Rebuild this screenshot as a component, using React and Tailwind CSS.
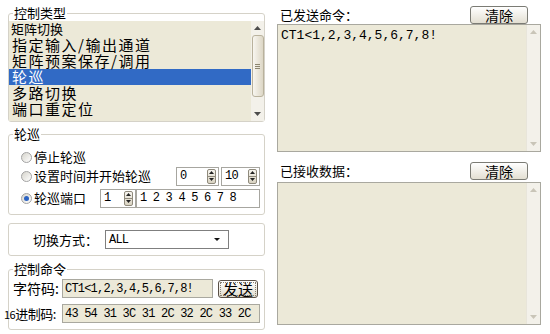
import React from "react";

const mono = "font-['Liberation_Mono',monospace]";

const Up = ({ color = "#4d4d4d" }) => (
  <svg width="7" height="4" viewBox="0 0 7 4">
    <polygon points="0,4 3.5,0 7,4" fill={color} />
  </svg>
);

const Down = ({ color = "#4d4d4d" }) => (
  <svg width="7" height="4" viewBox="0 0 7 4">
    <polygon points="0,0 3.5,4 7,0" fill={color} />
  </svg>
);

const Radio = ({ checked }) => (
  <span className="w-[11px] h-[11px] shrink-0 rounded-full border border-[#a3a3a3] bg-linear-to-br from-[#d6d4cc] to-white flex items-center justify-center">
    {checked && <span className="w-[5px] h-[5px] rounded-full bg-[#2c63c2]" />}
  </span>
);

const SpinArrows = () => (
  <div className="w-[9px] h-[15px] flex flex-col border border-[#8f8a7c] rounded-[2px] bg-linear-to-b from-[#f7f5ef] to-[#d9d3c2]">
    <div className="flex-1 flex items-center justify-center border-b border-[#8f8a7c]">
      <svg width="5" height="3" viewBox="0 0 5 3">
        <polygon points="0,3 2.5,0 5,3" fill="#222" />
      </svg>
    </div>
    <div className="flex-1 flex items-center justify-center">
      <svg width="5" height="3" viewBox="0 0 5 3">
        <polygon points="0,0 2.5,3 5,0" fill="#222" />
      </svg>
    </div>
  </div>
);

const Spin = ({ value, width }) => (
  <div
    className={`${width} h-[19px] border border-[#a7a6a0] bg-white flex items-center justify-between pl-[3px] pr-[2px] ${mono} text-[12px] tracking-[-0.8px]`}>
    <span>{value}</span>
    <SpinArrows />
  </div>
);

const XpButton = ({ children, className = "" }) => (
  <button
    className={`rounded-[3px] border border-[#7b7b74] bg-linear-to-b from-white to-[#e3dfd2] text-[14px] leading-none text-black ${className}`}>
    {children}
  </button>
);

const TextBox = ({ text, className }) => (
  <div className={`flex flex-col border border-[#a9a89f] bg-[#ece9d8] ${className}`}>
    <div className="flex-1 flex min-h-0">
      <div className={`flex-1 pl-[3px] pt-[4px] ${mono} text-[13px] leading-[14px]`}>
        {text}
      </div>
      <div className="w-[14px] flex flex-col items-center justify-between py-[5px] bg-[#f3f1ea] border-l border-[#e8e5da]">
        <Up color="#c9c5b8" />
        <Down color="#c9c5b8" />
      </div>
    </div>
  </div>
);

const items = [
  "指定输入/输出通道",
  "矩阵预案保存/调用",
  "轮巡",
  "多路切换",
  "端口重定位",
];

export default function App() {
  return (
    <div className="w-[550px] h-[334px] bg-white flex overflow-hidden text-black font-['Noto_Sans_CJK_SC',sans-serif]">
      {/* left column */}
      <div className="w-[257px] ml-[8px] flex flex-col">
        <fieldset className="mt-[6px] border border-[#d5d2c8] rounded-[3px] p-0">
          <legend className="ml-[4px] px-[1px] text-[13px] leading-[14px]">控制类型</legend>
          <div className="mt-[1px] h-[100px] flex bg-[#ece9d8]">
            <div className="flex-1 overflow-hidden">
              <div className="h-[16px] pl-[2px] text-[13px] leading-[16px]">矩阵切换</div>
              {items.map((it) => (
                <div
                  key={it}
                  className={`h-[16px] pl-[3px] text-[15px] leading-[16px] tracking-[1.5px] whitespace-nowrap ${
                    it === "轮巡" ? "bg-[#316ac5] text-white" : ""
                  }`}>
                  {it}
                </div>
              ))}
            </div>
            <div className="w-[13px] flex flex-col items-center bg-[#f3f1ea]">
              <div className="h-[14px] flex items-center">
                <Up />
              </div>
              <div className="w-[12px] h-[62px] rounded-[3px] border border-[#b9b29d] bg-linear-to-r from-[#f8f6f0] to-[#ddd7c6] flex flex-col items-center justify-center gap-[1px]">
                <div className="w-[5px] h-px bg-[#8c8670]" />
                <div className="w-[5px] h-px bg-[#8c8670]" />
                <div className="w-[5px] h-px bg-[#8c8670]" />
              </div>
              <div className="flex-1" />
              <div className="h-[14px] flex items-center">
                <Down />
              </div>
            </div>
          </div>
        </fieldset>

        <fieldset className="mt-[5px] border border-[#d5d2c8] rounded-[3px] p-0">
          <legend className="ml-[4px] px-[1px] text-[13px] leading-[14px]">轮巡</legend>
          <div className="pt-[7px] pb-[6px] pl-[12px] pr-[4px] text-[13px]">
            <div className="h-[18px] flex items-center gap-[2px]">
              <Radio />
              <span>停止轮巡</span>
            </div>
            <div className="h-[20px] flex items-center gap-[2px]">
              <Radio />
              <span>设置时间并开始轮巡</span>
              <div className="ml-auto flex gap-[2px]">
                <Spin value="0" width="w-[43px]" />
                <Spin value="10" width="w-[39px]" />
              </div>
            </div>
            <div className="mt-[2px] h-[20px] flex items-center gap-[2px]">
              <Radio checked />
              <span>轮巡端口</span>
              <div className="ml-auto flex">
                <Spin value="1" width="w-[36px]" />
                <div className={`w-[124px] h-[19px] border border-[#a7a6a0] bg-white pl-[3px] flex items-center ${mono} text-[12px] tracking-[-0.8px]`}>
                  1 2 3 4 5 6 7 8
                </div>
              </div>
            </div>
          </div>
        </fieldset>

        <div className="mt-[8px] h-[33px] border border-[#d5d2c8] rounded-[3px] flex items-center pl-[24px] gap-[7px]">
          <span className="text-[13px]">切换方式：</span>
          <div className={`w-[124px] h-[19px] border border-[#7f7f7f] bg-white flex items-center justify-between pl-[3px] pr-[8px] ${mono} text-[12px] tracking-[-0.8px]`}>
            <span>ALL</span>
            <svg width="6" height="3" viewBox="0 0 6 3">
              <polygon points="0,0 3,3 6,0" fill="#111" />
            </svg>
          </div>
        </div>

        <fieldset className="mt-[6px] border border-[#d5d2c8] rounded-[3px] p-0">
          <legend className="ml-[4px] px-[1px] text-[13px] leading-[14px]">控制命令</legend>
          <div className="pt-[3px] pb-[6px] pl-[4px]">
            <div className="h-[19px] flex items-center">
              <span className="w-[49px] text-[14px]">字符码:</span>
              <div className={`w-[151px] h-[19px] border border-[#a9a89f] bg-[#ece9d8] pl-[2px] flex items-center whitespace-nowrap ${mono} text-[12px] tracking-[-0.8px]`}>
                CT1&lt;1,2,3,4,5,6,7,8!
              </div>
              <button className="ml-[5px] w-[40px] h-[18px] rounded-[3px] border border-[#5a5046] bg-linear-to-b from-white to-[#e1dccd] p-[1px]">
                <span className="w-full h-full flex items-center justify-center border border-dotted border-[#8a8373] text-[15px] leading-none">
                  发送
                </span>
              </button>
            </div>
            <div className="mt-[6px] h-[19px] flex items-center">
              <span className="-ml-[9px] w-[58px] text-[13px] whitespace-nowrap tracking-[-0.5px]">
                <span className="text-[11px]">16</span>进制码:
              </span>
              <div className={`w-[198px] h-[19px] border border-[#a9a89f] bg-[#ece9d8] pl-[2px] flex items-center whitespace-nowrap ${mono} text-[12px] tracking-[-0.8px]`}>
                43 54 31 3C 31 2C 32 2C 33 2C
              </div>
            </div>
          </div>
        </fieldset>
      </div>

      {/* right column */}
      <div className="w-[264px] ml-[12px] pt-[5px] flex flex-col">
        <div className="h-[19px] flex items-center justify-between">
          <span className="pl-[3px] text-[13px]">已发送命令：</span>
          <XpButton className="mr-[13px] w-[58px] h-[18px]">清除</XpButton>
        </div>
        <TextBox className="h-[128px]" text="CT1<1,2,3,4,5,6,7,8!" />
        <div className="mt-[9px] h-[20px] flex items-center justify-between">
          <span className="pl-[3px] text-[13px]">已接收数据：</span>
          <XpButton className="mr-[13px] w-[58px] h-[18px]">清除</XpButton>
        </div>
        <TextBox className="mt-[1px] h-[143px]" text="" />
      </div>
    </div>
  );
}
